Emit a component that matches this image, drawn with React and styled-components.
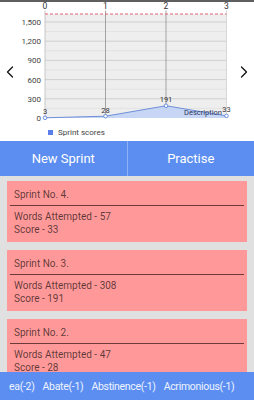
import React from "react";
import styled, { createGlobalStyle } from "styled-components";
import { ChevronLeft, ChevronRight } from "lucide-react";

const GlobalStyle = createGlobalStyle`
  html, body {
    margin: 0;
    padding: 0;
    background: #e0e0e0;
    font-family: Roboto, "Noto Sans", sans-serif;
  }
`;

const sprints = [
  { no: 4, words: 57, score: 33 },
  { no: 3, words: 308, score: 191 },
  { no: 2, words: 47, score: 28 },
];

const scores = [3, 28, 191, 33];
const words = ["ea(-2)", "Abate(-1)", "Abstinence(-1)", "Acrimonious(-1)"];

// chart coords (svg is offset 20px from the page's left edge)
const X0 = 25;
const XS = 60.5;
const Y0 = 116;
const TOP = 12;
const K = 0.064;
const px = (i) => X0 + i * XS;
const py = (v) => Y0 - v * K;

const Screen = styled.div`
  width: 254px;
  height: 400px;
  display: flex;
  flex-direction: column;
  overflow: hidden;
  border-top: 2px solid #5f5f5f;
  box-sizing: border-box;
`;

const ChartRow = styled.div`
  display: flex;
  align-items: stretch;
  height: 139px;
  background: #fff;
`;

const ArrowCell = styled.div`
  width: 20px;
  display: flex;
  align-items: center;
  justify-content: center;
  color: #111;
`;

const ButtonBar = styled.div`
  display: flex;
  height: 35px;
  background: #5b8ef0;
`;

const BarButton = styled.div`
  flex: 1;
  display: flex;
  align-items: center;
  justify-content: center;
  color: #fff;
  font-size: 13px;
  border-left: ${(p) => (p.$divided ? "1px solid #8fb1f5" : "none")};
`;

const List = styled.div`
  flex: 1;
  overflow: hidden;
  padding: 5px 7px 0;
  display: flex;
  flex-direction: column;
  gap: 8px;
`;

const Card = styled.div`
  background: #ff9999;
  padding: 0 3px;
  flex-shrink: 0;
  color: rgba(0, 0, 0, 0.64);
  font-size: 10px;
`;

const CardTitle = styled.div`
  height: 25px;
  display: flex;
  align-items: center;
  padding: 2px 4px 0;
  box-sizing: border-box;
  border-bottom: 1px solid #6d3a3a;
`;

const CardBody = styled.div`
  padding: 5px 4px 6px;
  line-height: 12.5px;
`;

const WordBar = styled.div`
  height: 28px;
  background: #5b8ef0;
  display: flex;
  align-items: center;
  overflow: hidden;
  padding-left: 9px;
  gap: 8px;
  color: #eef3ff;
  font-size: 10.5px;
  letter-spacing: -0.3px;
  white-space: nowrap;
`;

const Chart = () => (
  <svg width="214" height="139" viewBox="0 0 214 139">
    <rect x={X0} y={TOP} width={XS * 3} height={Y0 - TOP} fill="#eeeeee" />
    {[150, 450, 750, 1050, 1350].map((v) => (
      <line key={v} x1={X0} x2={px(3)} y1={py(v)} y2={py(v)} stroke="#e2e2e2" strokeWidth="1" />
    ))}
    {[300, 600, 900, 1200, 1500].map((v) => (
      <line key={v} x1={X0} x2={px(3)} y1={py(v)} y2={py(v)} stroke="#cfcfcf" strokeWidth="1" />
    ))}
    {[1, 2].map((i) => (
      <line key={i} x1={px(i)} x2={px(i)} y1={8.5} y2={Y0} stroke="#8f8f8f" strokeWidth="0.8" />
    ))}
    <line x1={X0} x2={X0} y1={8.5} y2={Y0} stroke="#bbb" strokeWidth="0.8" />
    <line x1={px(3)} x2={px(3)} y1={8.5} y2={Y0} stroke="#d0d0d0" strokeWidth="0.8" />
    <line x1={X0} x2={px(3)} y1={TOP} y2={TOP} stroke="#e06070" strokeWidth="1" strokeDasharray="3 2" />
    {[0, 300, 600, 900, 1200, 1500].map((v) => (
      <text key={v} x={21} y={py(v) + 3} fontSize="8" fill="#444" textAnchor="end" fontFamily="Roboto">
        {v.toLocaleString("en-US")}
      </text>
    ))}
    {[0, 1, 2, 3].map((i) => (
      <text key={i} x={px(i)} y={6.5} fontSize="8.5" fill="#333" textAnchor="middle" fontFamily="Roboto">
        {i}
      </text>
    ))}
    <polygon
      points={`${px(0)},${Y0} ${scores.map((s, i) => `${px(i)},${py(s)}`).join(" ")} ${px(3)},${Y0}`}
      fill="#c6d6f4"
    />
    <polyline
      points={scores.map((s, i) => `${px(i)},${py(s)}`).join(" ")}
      fill="none"
      stroke="#6f8fd8"
      strokeWidth="1"
    />
    <text x={202} y={113} fontSize="7.5" fill="#2a3560" textAnchor="end" fontFamily="Roboto">
      Description
    </text>
    {scores.map((s, i) => (
      <g key={i}>
        <circle cx={px(i)} cy={py(s)} r="1.8" fill="#fff" stroke="#5f86d8" strokeWidth="0.9" />
        <text x={px(i)} y={py(s) - 3.5} fontSize="7.5" fill="#333" textAnchor="middle" fontFamily="Roboto">
          {s}
        </text>
      </g>
    ))}
    <rect x={28} y={128} width={5} height={5} fill="#5b7fe8" />
    <text x={38} y={133} fontSize="8" fill="#444" fontFamily="Roboto">
      Sprint scores
    </text>
  </svg>
);

const App = () => {
  return (
    <>
      <GlobalStyle />
      <Screen>
        <ChartRow>
          <ArrowCell>
            <ChevronLeft size={20} strokeWidth={1.5} />
          </ArrowCell>
          <Chart />
          <ArrowCell>
            <ChevronRight size={20} strokeWidth={1.5} />
          </ArrowCell>
        </ChartRow>
        <ButtonBar>
          <BarButton>New Sprint</BarButton>
          <BarButton $divided>Practise</BarButton>
        </ButtonBar>
        <List>
          {sprints.map((s) => (
            <Card key={s.no}>
              <CardTitle>Sprint No. {s.no}.</CardTitle>
              <CardBody>
                Words Attempted - {s.words}
                <br />
                Score - {s.score}
              </CardBody>
            </Card>
          ))}
        </List>
        <WordBar>
          {words.map((w) => (
            <span key={w}>{w}</span>
          ))}
        </WordBar>
      </Screen>
    </>
  );
};

export default App;
